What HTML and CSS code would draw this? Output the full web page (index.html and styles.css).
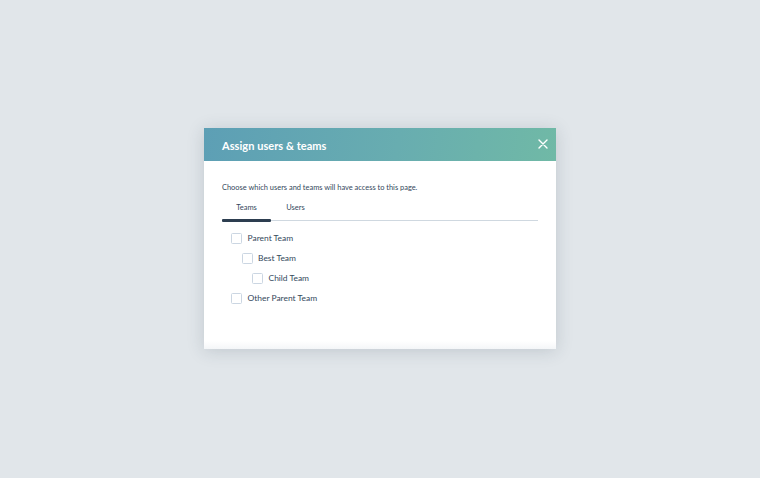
FILE: index.html
```html
<!DOCTYPE html>
<html>
<head>
<meta charset="utf-8">
<link rel="stylesheet" href="styles.css">
</head>
<body>
<div class="modal">
  <div class="header">
    <h1 class="title">Assign users &amp; teams</h1>
    <button class="close" aria-label="Close">
      <svg width="10" height="10" viewBox="0 0 10 10"><path d="M1 1L9 9M9 1L1 9" stroke="#fff" stroke-width="1.4" stroke-linecap="round"/></svg>
    </button>
  </div>
  <div class="body">
    <p class="desc">Choose which users and teams will have access to this page.</p>
    <div class="tabs">
      <div class="tab active">Teams</div>
      <div class="tab">Users</div>
    </div>
    <ul class="list">
      <li class="item lvl0"><span class="box"></span>Parent Team</li>
      <li class="item lvl1"><span class="box"></span>Best Team</li>
      <li class="item lvl2"><span class="box"></span>Child Team</li>
      <li class="item lvl0"><span class="box"></span>Other Parent Team</li>
    </ul>
  </div>
</div>
</body>
</html>
```
FILE: styles.css
```css
html, body {
  margin: 0;
  height: 100%;
}
body {
  background: #e1e6ea;
  display: flex;
  align-items: center;
  justify-content: center;
  font-family: "Lato", "Noto Sans", sans-serif;
  color: #33475b;
}
.modal {
  width: 352px;
  height: 221px;
  background: #fff;
  box-shadow: 0 2px 16px rgba(45, 62, 80, 0.18);
  display: flex;
  flex-direction: column;
  margin-top: -1px;
}
.header {
  height: 33px;
  background: linear-gradient(100deg, #5d9fb5 0%, #68adb0 55%, #70b9a6 100%);
  display: flex;
  align-items: center;
  justify-content: space-between;
  padding: 0 6px 0 18px;
}
.title {
  margin: 0;
  color: #fff;
  font-size: 11px;
  font-weight: 700;
  letter-spacing: 0.05px;
  padding-top: 1px;
}
.close {
  background: none;
  border: 0;
  padding: 0;
  width: 12px;
  height: 12px;
  display: flex;
  align-items: center;
  justify-content: center;
  margin-top: -1px;
  margin-right: 1px;
}
.body {
  flex: 1;
  padding: 21px 18px 0 18px;
  background: linear-gradient(to bottom, #fff 0, #fff calc(100% - 8px), #f4f6f8 100%);
}
.desc {
  margin: 0;
  font-size: 7.45px;
  line-height: 12px;
}
.tabs {
  display: flex;
  margin-top: 8px;
  border-bottom: 1.5px solid #cfd8e0;
}
.tab {
  font-size: 7.5px;
  line-height: 12px;
  padding: 0 0 6px 0;
  width: 49px;
  text-align: center;
  position: relative;
}
.tab.active::after {
  content: "";
  position: absolute;
  left: 0;
  right: 0;
  bottom: -2px;
  height: 3px;
  background: #2d3e50;
  border-radius: 1px;
}
.list {
  list-style: none;
  margin: 7px 0 0 0;
  padding: 0;
}
.item {
  display: flex;
  align-items: center;
  height: 20px;
  font-size: 8.45px;
}
.lvl0 { padding-left: 9px; }
.lvl1 { padding-left: 19.5px; }
.lvl2 { padding-left: 30px; }
.box {
  width: 9px;
  height: 9px;
  border: 1px solid #cbd6e2;
  border-radius: 1.5px;
  margin-right: 5.5px;
  background: #fff;
}
```
